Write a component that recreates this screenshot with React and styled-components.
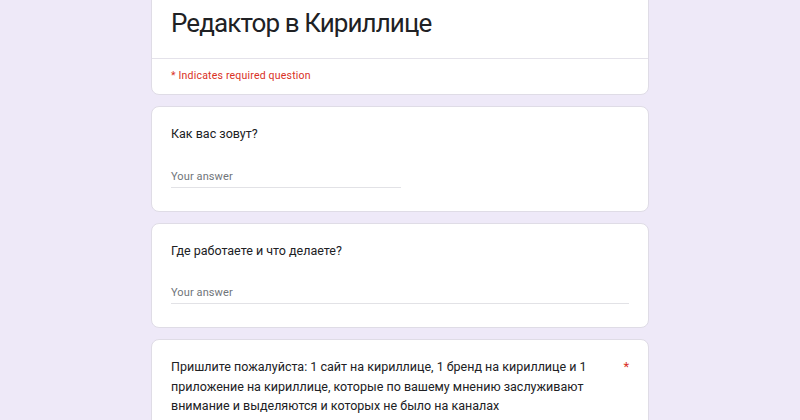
import React from 'react';
import styled, { createGlobalStyle } from 'styled-components';

const GlobalStyle = createGlobalStyle`
  html, body {
    margin: 0;
    padding: 0;
    background: #eee9f8;
    font-family: Roboto, "Noto Sans", Arial, sans-serif;
    color: #202124;
  }
`;

const Page = styled.div`
  width: 498px;
  margin: -20px auto 0;
  display: flex;
  flex-direction: column;
  gap: 11px;
`;

const Card = styled.div`
  background: #fff;
  border: 1px solid #dfdce6;
  border-radius: 8px;
  box-sizing: border-box;
`;

const Header = styled.div`
  padding: 26px 19px 19px;
  border-bottom: 1px solid #e4e2ea;
`;

const Title = styled.h1`
  margin: 0;
  font-size: 26px;
  line-height: 32px;
  font-weight: 400;
  letter-spacing: -0.9px;
  color: #202124;
`;

const Required = styled.div`
  padding: 8px 19px 9px;
  font-size: 10.5px;
  line-height: 18px;
  color: #d93025;
  letter-spacing: 0.2px;
`;

const Question = styled(Card)`
  padding: 17px 19px 23px 19px;
`;

const QuestionRow = styled.div`
  display: flex;
  justify-content: space-between;
  align-items: flex-start;
  gap: 16px;
`;

const Label = styled.div`
  font-size: 12.5px;
  line-height: 19.5px;
  max-width: ${(p) => (p.$wide ? '440px' : 'none')};
`;

const Star = styled.span`
  color: #d93025;
  font-size: 13px;
  line-height: 19.5px;
`;

const Input = styled.div`
  margin-top: 23px;
  width: ${(p) => (p.$short ? '230px' : '100%')};
  font-size: 11px;
  line-height: 20px;
  color: #70757a;
  letter-spacing: 0.1px;
  border-bottom: 1px solid #e2e2e6;
`;

export default function App() {
  return (
    <>
      <GlobalStyle />
      <Page>
        <Card>
          <Header>
            <Title>Редактор в Кириллице</Title>
          </Header>
          <Required>* Indicates required question</Required>
        </Card>
        <Question>
          <Label>Как вас зовут?</Label>
          <Input $short>Your answer</Input>
        </Question>
        <Question>
          <Label>Где работаете и что делаете?</Label>
          <Input>Your answer</Input>
        </Question>
        <Question>
          <QuestionRow>
            <Label $wide>
              Пришлите пожалуйста: 1 сайт на кириллице, 1 бренд на кириллице и 1
              приложение на кириллице, которые по вашему мнению заслуживают
              внимание и выделяются и которых не было на каналах
            </Label>
            <Star>*</Star>
          </QuestionRow>
          <Input>Your answer</Input>
        </Question>
      </Page>
    </>
  );
}
